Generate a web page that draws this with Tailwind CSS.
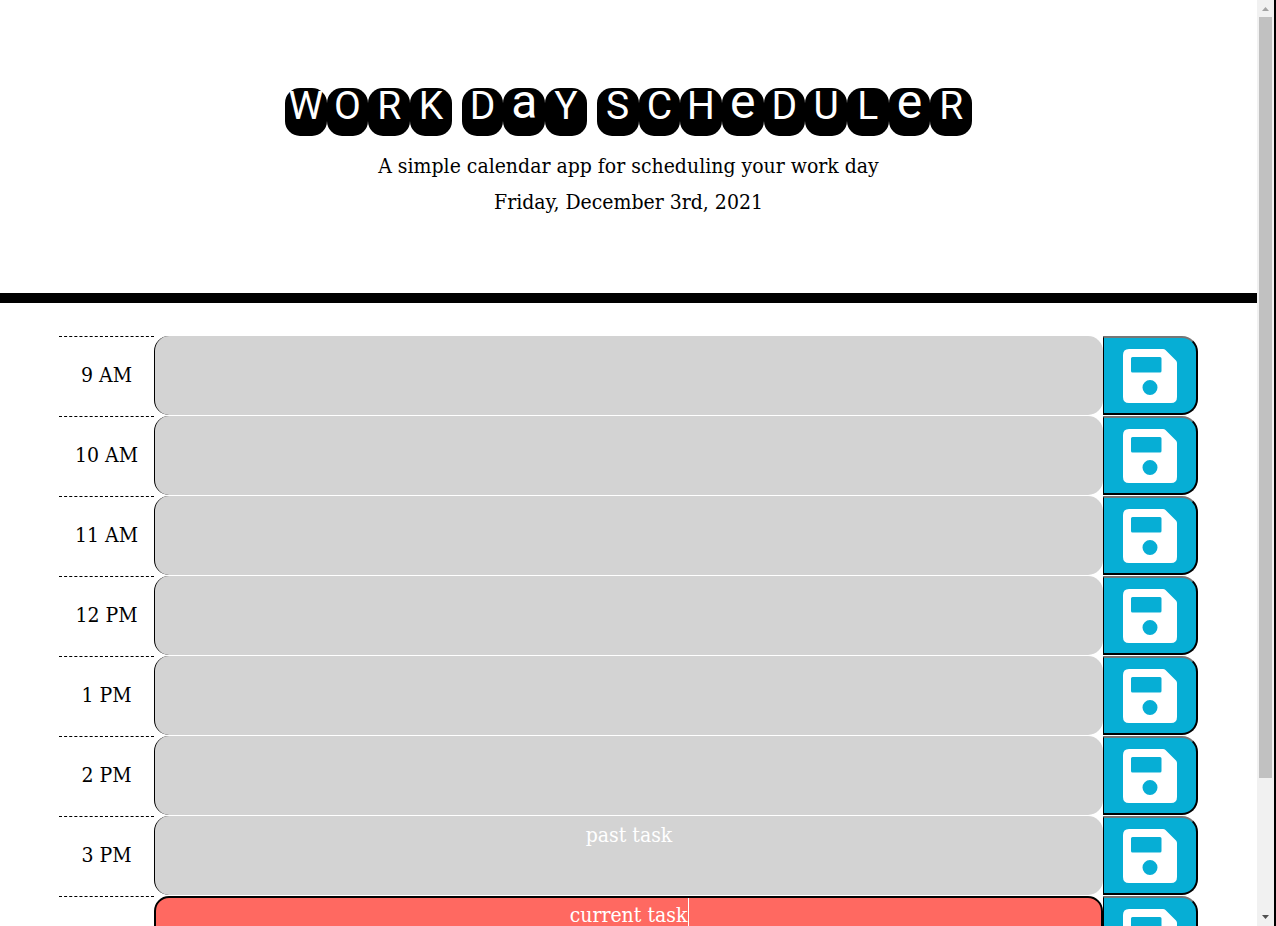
<!DOCTYPE html>
<html lang="en">
<head>
<meta charset="utf-8">
<title>Work Day Scheduler</title>
<script src="https://cdn.jsdelivr.net/npm/@tailwindcss/browser@4"></script>
</head>
<body class="flex h-screen overflow-hidden bg-white text-black text-[21px] font-['DejaVu_Serif_Condensed','DejaVu_Serif',serif]">
<div class="min-w-0 flex-1 overflow-hidden">
  <header class="border-b-10 border-black pt-22 pb-[73px] text-center">
    <h1 id="title" aria-label="Work Day Scheduler" class="mx-auto mb-3 flex max-w-[687px] gap-[10px] text-white font-[Roboto,sans-serif]"></h1>
    <p class="leading-9">A simple calendar app for scheduling your work day</p>
    <p class="leading-9">Friday, December 3rd, 2021</p>
  </header>
  <main id="rows" class="mx-auto mt-[33px] w-full max-w-[1139px]"></main>
</div>
<div aria-hidden="true" class="flex w-[19px] shrink-0 flex-col border-r-2 border-black bg-[#f1f1f1] px-[2px]">
  <svg class="h-[17px] w-[13px] shrink-0" viewBox="0 0 13 17"><path d="M3 11h7L6.500 7z" fill="#a3a3a3"/></svg>
  <div class="flex-[761] bg-[#c1c1c1]"></div>
  <div class="flex-[131]"></div>
  <svg class="h-[17px] w-[13px] shrink-0" viewBox="0 0 13 17"><path d="M3 6h7l-3.500 4z" fill="#505050"/></svg>
</div>
<script>
const title = document.getElementById('title');
const groups = { 'WORK': 'flex flex-[4]', 'DaY': 'flex flex-[3]', 'SCHeDULeR': 'flex flex-[9]' };
for (const [word, cls] of Object.entries(groups)) {
  const g = document.createElement('span');
  g.className = cls;
  for (const c of word) {
    const small = c === 'a' || c === 'e';
    g.innerHTML += `<span class="flex h-12 min-w-0 flex-1 justify-center rounded-[15px] bg-black ${small ? 'text-[48px] leading-[28px]' : 'text-[39px] leading-[36px]'}">${c}</span>`;
  }
  title.append(g);
}
const hours = ['9 AM', '10 AM', '11 AM', '12 PM', '1 PM', '2 PM', '3 PM', '4 PM'];
const tasks = { '3 PM': 'past task', '4 PM': 'current task' };
document.getElementById('rows').innerHTML = hours.map((h, i) => {
  const now = h === '4 PM';
  return `<div class="flex h-20">
    <label for="t${i}" aria-label="${h}" class="flex w-[95px] shrink-0 items-center justify-center border-t border-dashed border-black pb-[2px]">${now ? '' : h}</label>
    <div class="relative flex min-w-0 flex-1 pb-px">
      <textarea id="t${i}" aria-label="${h}" class="block h-full w-full resize-none rounded-[15px] px-2 py-1 text-center leading-[30px] text-white outline-none ${now ? 'border-2 border-black bg-[#ff6961] pt-[2px]' : 'border-l border-black bg-[#d3d3d3]'}">${tasks[h] || ''}</textarea>
      ${now ? '<span class="absolute top-[2px] left-1/2 ml-[59px] h-[30px] w-px bg-white"></span>' : ''}
    </div>
    <button type="button" aria-label="Save ${h}" class="mb-px flex w-[95px] shrink-0 items-center justify-center rounded-r-[16px] border-2 border-l border-t-[#767676] border-r-black border-b-black border-l-black bg-[#06aed5]">
      <svg class="size-[54px]" viewBox="0 0 54 54"><path fill="#fff" fill-rule="evenodd" d="M6 0h34q1.500 0 2.500 1l10.500 10.500q1 1 1 2.500v34q0 6-6 6H6q-6 0-6-6V6q0-6 6-6zM9.500 8q-1.500 0-1.500 1.500v12.500q0 1.500 1.500 1.500h27.500q1.500 0 1.500-1.500V9.500q0-1.500-1.500-1.500zM27 31a7.500 7.500 0 1 0 0 15a7.500 7.500 0 0 0 0-15z"/></svg>
    </button>
  </div>`;
}).join('');
</script>
</body>
</html>
